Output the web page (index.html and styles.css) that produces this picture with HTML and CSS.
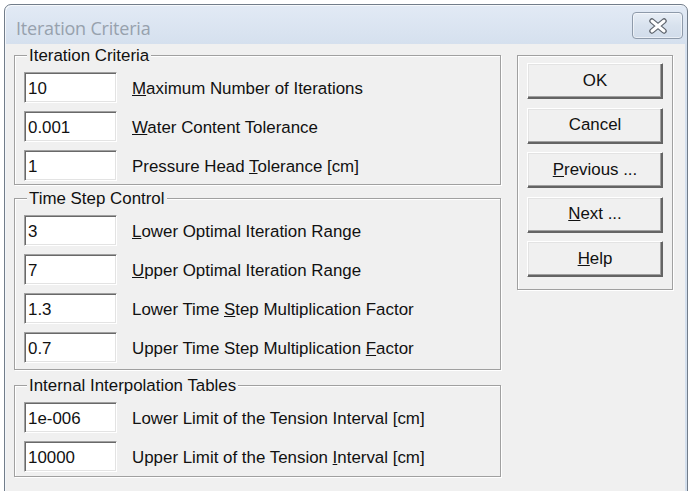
FILE: index.html
```html
<!DOCTYPE html>
<html>
<head>
<meta charset="utf-8">
<title>Iteration Criteria</title>
<link rel="stylesheet" href="styles.css">
</head>
<body>
<div class="window">
  <div class="titlebar">
    <span class="title">Iteration Criteria</span>
    <button class="close" aria-label="Close">
      <svg width="22" height="16" viewBox="0 0 22 16">
        <path d="M5 3 L17 13 M17 3 L5 13" stroke="#5f656e" stroke-width="5.5" stroke-linecap="round" fill="none"/>
        <path d="M5 3 L17 13 M17 3 L5 13" stroke="#ffffff" stroke-width="3" stroke-linecap="round" fill="none"/>
      </svg>
    </button>
  </div>
  <div class="client">
    <div class="left">
      <div class="group g1">
        <div class="gtitle">Iteration Criteria</div>
        <div class="rows">
          <div class="row"><div class="edit">10</div><span class="label"><u>M</u>aximum Number of Iterations</span></div>
          <div class="row"><div class="edit">0.001</div><span class="label"><u>W</u>ater Content Tolerance</span></div>
          <div class="row"><div class="edit">1</div><span class="label">Pressure Head <u>T</u>olerance [cm]</span></div>
        </div>
      </div>
      <div class="group g2">
        <div class="gtitle">Time Step Control</div>
        <div class="rows">
          <div class="row"><div class="edit">3</div><span class="label"><u>L</u>ower Optimal Iteration Range</span></div>
          <div class="row"><div class="edit">7</div><span class="label"><u>U</u>pper Optimal Iteration Range</span></div>
          <div class="row"><div class="edit">1.3</div><span class="label">Lower Time <u>S</u>tep Multiplication Factor</span></div>
          <div class="row"><div class="edit">0.7</div><span class="label">Upper Time Step Multiplication <u>F</u>actor</span></div>
        </div>
      </div>
      <div class="group g3">
        <div class="gtitle">Internal Interpolation Tables</div>
        <div class="rows">
          <div class="row"><div class="edit">1e-006</div><span class="label">Lower Limit of the Tension Interval [cm]</span></div>
          <div class="row"><div class="edit">10000</div><span class="label">Upper Limit of the Tension <u>I</u>nterval [cm]</span></div>
        </div>
      </div>
    </div>
    <div class="group buttons">
      <div class="btn">OK</div>
      <div class="btn">Cancel</div>
      <div class="btn"><u>P</u>revious ...</div>
      <div class="btn"><u>N</u>ext ...</div>
      <div class="btn"><u>H</u>elp</div>
    </div>
  </div>
</div>
</body>
</html>
```

FILE: styles.css
```css
html, body {
  margin: 0;
  padding: 0;
  background: #ffffff;
  overflow: hidden;
  width: 692px;
  height: 491px;
}

.window {
  box-sizing: border-box;
  margin: 4px 0 0 4px;
  width: 684px;
  height: 500px;
  border: 1px solid #727d8a;
  border-radius: 7px 7px 0 0;
  background: linear-gradient(#e2eaf5, #d5e0ee 40px, #d3dfed);
  box-shadow: inset 1px 1px 0 rgba(255,255,255,0.7);
  display: flex;
  flex-direction: column;
}

.titlebar {
  height: 39px;
  display: flex;
  align-items: flex-start;
  justify-content: space-between;
  padding-left: 11px;
}

.title {
  font-family: "Open Sans", "Noto Sans", sans-serif;
  font-size: 18px;
  line-height: 24px;
  margin-top: 11px;
  color: #97a1ad;
  letter-spacing: -0.2px;
}

.close {
  box-sizing: border-box;
  width: 51px;
  height: 27px;
  margin: 7px 4px 0 0;
  padding: 0;
  border: 1px solid #8e9aaa;
  border-radius: 4px;
  background: linear-gradient(#e8eef6, #d8e2ee 50%, #d1dcea);
  box-shadow: inset 0 0 0 1px rgba(255,255,255,0.55);
  display: flex;
  align-items: center;
  justify-content: center;
}

.client {
  flex: 1;
  margin: 0 2px 0 1px;
  background: #f0f0f0;
  display: flex;
  align-items: flex-start;
  padding: 11px 0 0 8px;
  font-family: "Liberation Sans", Arial, sans-serif;
  font-size: 16.9px;
  color: #111;
}

.left {
  width: 487px;
  display: flex;
  flex-direction: column;
}

.group {
  box-sizing: border-box;
  border: 1px solid #a0a0a0;
  box-shadow: 1px 1px 0 #ffffff, inset 1px 1px 0 #ffffff;
  padding: 0 0 0 9px;
}

.gtitle {
  display: block;
  width: max-content;
  margin: -10px 0 0 3px;
  padding: 0 2px 0 2px;
  line-height: 20px;
  height: 20px;
  background: #f0f0f0;
  white-space: nowrap;
}

.rows {
  display: flex;
  flex-direction: column;
  gap: 8px;
  margin-top: 6px;
}

.row {
  display: flex;
  align-items: center;
  height: 31px;
}

.edit {
  box-sizing: border-box;
  width: 93px;
  height: 31px;
  background: #ffffff;
  border: 1px solid;
  border-color: #a0a0a0 #ffffff #ffffff #a0a0a0;
  box-shadow: inset 1px 1px 0 #696969, inset -1px -1px 0 #e3e3e3;
  padding: 1px 0 0 3px;
  line-height: 29px;
  white-space: nowrap;
}

.label {
  margin-left: 15px;
  padding-top: 2px;
  white-space: nowrap;
}

.g1 { padding-bottom: 3px; }
.g2 { margin-top: 13px; padding-bottom: 6px; }
.g3 { margin-top: 15px; padding-bottom: 4px; }

.buttons {
  margin-left: 16px;
  width: 156px;
  padding: 7px 9px 12px 9px;
  display: flex;
  flex-direction: column;
  gap: 8.5px;
}

.btn {
  box-sizing: border-box;
  height: 36px;
  background: #f0f0f0;
  border: 1px solid;
  border-color: #ffffff #646464 #646464 #ffffff;
  box-shadow: inset -1px -1px 0 #646464, inset -2px -2px 0 #a0a0a0, inset 1px 1px 0 #e3e3e3;
  display: flex;
  align-items: center;
  justify-content: center;
  line-height: 20px;
  padding-bottom: 1px;
}
```
